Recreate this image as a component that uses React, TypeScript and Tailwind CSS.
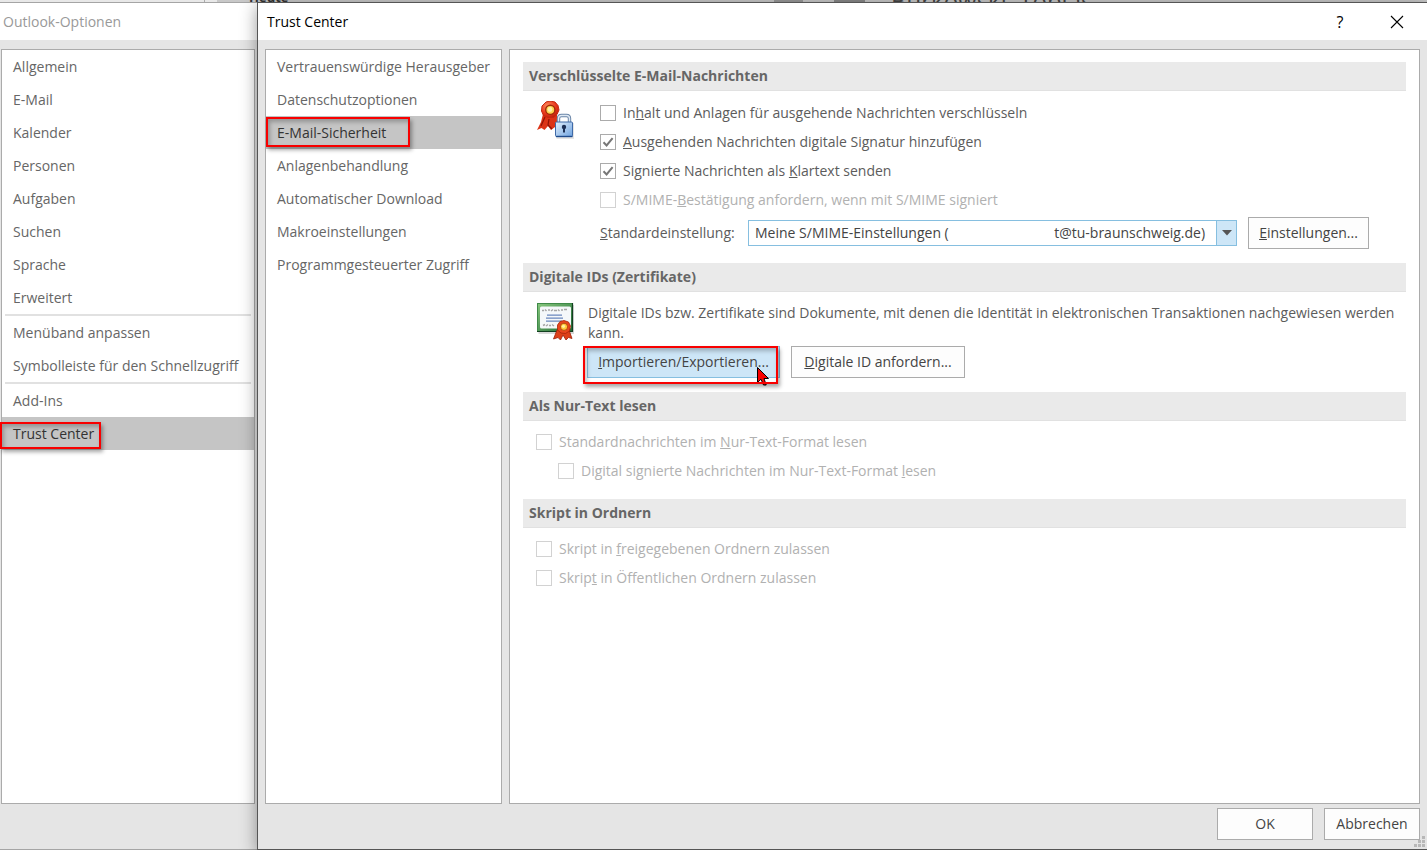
import React from 'react';

const optionGroups = [
  ['Allgemein', 'E-Mail', 'Kalender', 'Personen', 'Aufgaben', 'Suchen', 'Sprache', 'Erweitert'],
  ['Menüband anpassen', 'Symbolleiste für den Schnellzugriff'],
  ['Add-Ins', 'Trust Center'],
];

const trustItems = [
  'Vertrauenswürdige Herausgeber',
  'Datenschutzoptionen',
  'E-Mail-Sicherheit',
  'Anlagenbehandlung',
  'Automatischer Download',
  'Makroeinstellungen',
  'Programmgesteuerter Zugriff',
];

const accountLabel = 'Meine S/MIME-Einstellungen (' + '\u00a0'.repeat(29) + 't@tu-braunschweig.de)';

const Marker: React.FC<{ className: string }> = ({ className }) => (
  <span className={`pointer-events-none absolute border-2 border-[#f80000] shadow-[2px_3px_4px_rgba(0,0,0,0.35),inset_2px_3px_4px_rgba(0,0,0,0.25)] ${className}`}></span>
);

const NavItem: React.FC<{ label: string; active?: boolean; children?: React.ReactNode }> = ({ label, active, children }) => (
  <li className="relative">
    <button
      type="button"
      className={`block h-[33px] w-full whitespace-nowrap pl-[11px] text-left ${active ? 'bg-[#c5c5c5] text-[#333333]' : 'text-[#666666]'}`}
    >
      {label}
    </button>
    {children}
  </li>
);

const Check: React.FC<{ id: string; checked?: boolean; disabled?: boolean; children: React.ReactNode }> = ({ id, checked, disabled, children }) => (
  <div className="flex h-[29px] items-center">
    <span className="relative flex size-4 shrink-0">
      <input
        id={id}
        type="checkbox"
        defaultChecked={checked}
        disabled={disabled}
        className="peer size-4 appearance-none border border-[#ababab] bg-white disabled:border-[#d2d2d2]"
      />
      <svg viewBox="0 0 16 16" className="pointer-events-none absolute inset-0 hidden size-4 peer-checked:block">
        <path d="M3.5 8.2 6.6 11.4 12.6 4.2" fill="none" stroke="#777777" strokeWidth="2" />
      </svg>
    </span>
    <label htmlFor={id} className={`pl-[7px] ${disabled ? 'text-[#b1b1b1]' : 'text-[#5c5c5c]'}`}>
      {children}
    </label>
  </div>
);

const Section: React.FC<{ title: string; children: React.ReactNode }> = ({ title, children }) => (
  <section className="pb-[14px]">
    <h2 className="h-[29px] border-b border-[#e1e1e1] bg-[#eaeaea] pl-1.5 font-bold leading-7 text-[#666666]">{title}</h2>
    {children}
  </section>
);

const PushButton: React.FC<{ hot?: boolean; className?: string; children: React.ReactNode }> = ({ hot, className = '', children }) => (
  <button
    type="button"
    className={`h-8 whitespace-nowrap border text-[#444444] ${hot ? 'border-[#86bfe0] bg-[#cde6f7]' : 'border-[#ababab] bg-[#fdfdfd]'} ${className}`}
  >
    {children}
  </button>
);

const SealLockIcon = () => (
  <svg viewBox="0 0 38 38" className="size-[38px] shrink-0">
    <defs>
      <linearGradient id="lockBody" x1="0" y1="0" x2="1" y2="1">
        <stop offset="0" stopColor="#e4f1fd" />
        <stop offset="1" stopColor="#6fa3e0" />
      </linearGradient>
      <radialGradient id="sealRed" cx="0.35" cy="0.3" r="0.8">
        <stop offset="0" stopColor="#ff8a5c" />
        <stop offset="0.6" stopColor="#e8351a" />
        <stop offset="1" stopColor="#b31d0a" />
      </radialGradient>
    </defs>
    <path d="M7 13 5 21 1 29 5.5 27 8.5 29 12 25 15 29 19 26 21 27V14Z" fill="#dc3316" />
    <path d="M9 16 5 25M13 18 12 24 16 28" stroke="#8f1405" strokeWidth="1.2" fill="none" />
    <path d="M10 1 14 0 19 1 22 4.5 23 9 21 13.5 17.5 16.5 12 16.5 7.5 14.5 5.5 10 6 5Z" fill="url(#sealRed)" stroke="#c52810" />
    <circle cx="14.3" cy="8.8" r="4.6" fill="#ffd451" stroke="#9f2d08" strokeWidth="1.4" />
    <circle cx="14" cy="8.5" r="2.4" fill="#fff2a8" />
    <rect x="20.5" y="22" width="17.5" height="16" fill="#000" opacity="0.1" />
    <path d="M22.5 21V17.5Q22.5 14.5 25.5 14.5H30.5Q33.5 14.5 33.5 17.5V21" fill="none" stroke="#6b86a8" strokeWidth="3.4" />
    <path d="M22.5 21V17.5Q22.5 14.5 25.5 14.5H30.5Q33.5 14.5 33.5 17.5V21" fill="none" stroke="#dfe9f4" strokeWidth="1.4" />
    <rect x="19.5" y="21" width="17" height="14.5" rx="1" fill="url(#lockBody)" stroke="#3f6aa8" />
    <path d="M20 35.5H36.5" stroke="#1e4a8c" strokeWidth="1.4" />
    <circle cx="28" cy="26" r="2.2" fill="#1c2f55" />
    <path d="M27 26H29V31.5H27Z" fill="#1c2f55" />
  </svg>
);

const CertificateIcon = () => (
  <svg viewBox="0 0 38 38" className="size-[38px] shrink-0">
    <defs>
      <linearGradient id="certFrame" x1="0" y1="0" x2="1" y2="1">
        <stop offset="0" stopColor="#86c67c" />
        <stop offset="1" stopColor="#1f6b35" />
      </linearGradient>
    </defs>
    <rect x="2.5" y="2" width="35.5" height="29" fill="#000" opacity="0.15" />
    <rect x="1.5" y="0.5" width="35" height="28" fill="url(#certFrame)" stroke="#3f8a48" />
    <path d="M1 28.5H36.5V0" fill="none" stroke="#123f20" strokeWidth="1.2" />
    <rect x="4" y="3.5" width="31" height="22" rx="1.5" fill="#f5f8fa" />
    <path d="M6 7.5H8M9 6.5 10.5 8M12 7H14M15 8 17 6.5M18 7.5H21M22 6.5 23.5 8M25 7H27M28 6.5H31" stroke="#a5a5a5" strokeWidth="1.4" />
    <path d="M11 12.2H26M10 15.2H27M10 18.2H26" stroke="#6a86bd" strokeWidth="1.3" />
    <path d="M7 22.5 9 21.5M10 23 12 21.5M13 22.5H15M16 21.5 18 23" stroke="#a5a5a5" strokeWidth="1.4" />
    <path d="M21 27 17.5 36 22 34.5 24.5 37 27 32 30 37 32.5 34.5 36 35.5 33 27Z" fill="#dd3f18" stroke="#9b2007" strokeWidth="0.8" />
    <path d="M24 18.5 28 17.5 32.5 19 34.5 23 33.5 28 29.5 30.5 25 30 21.5 27 21.5 22Z" fill="#e8451c" stroke="#a82509" strokeWidth="0.8" />
    <circle cx="28" cy="23.8" r="3.6" fill="#ffc83c" stroke="#a53a08" strokeWidth="0.8" />
    <circle cx="27.5" cy="23.3" r="1.6" fill="#fff0a0" />
  </svg>
);

const OptionsWindow = () => (
  <div className="flex w-[257px] shrink-0 flex-col border-b border-t border-[#a5a5a5] bg-[#e5e5e5]">
    <h1 className="h-[37px] bg-white pl-[3px] leading-[37px] text-[#999999]">Outlook-Optionen</h1>
    <nav className="mb-[45px] ml-px mr-0.5 mt-[9px] flex-1 border border-[#ababab] bg-white">
      {optionGroups.map((group, i) => (
        <ul key={group[0]} className="relative">
          {i > 0 && <li className="mx-[3px] h-0.5 bg-[#e1e1e1]"></li>}
          {group.map((label) => (
            <NavItem key={label} label={label} active={label === 'Trust Center'}>
              {label === 'Trust Center' && <Marker className="-left-0.5 top-[5px] h-[27px] w-[101px]" />}
            </NavItem>
          ))}
        </ul>
      ))}
    </nav>
  </div>
);

const TitleBar = () => (
  <header className="flex h-[37px] shrink-0 items-center bg-white pl-[9px] pr-[22px] text-black">
    <h1 className="flex-1">Trust Center</h1>
    <button type="button" aria-label="Hilfe" className="mr-[41px] w-4 text-center text-[16px]">?</button>
    <button type="button" aria-label="Schließen" className="size-4">
      <svg viewBox="0 0 16 16" className="size-4">
        <path d="M2 2 14 14M14 2 2 14" stroke="#000000" strokeWidth="1.1" fill="none" />
      </svg>
    </button>
  </header>
);

const SettingsPanel = () => (
  <main className="min-w-0 flex-1 border border-[#ababab] bg-white pl-[13px] pr-[13px] pt-3">
    <Section title="Verschlüsselte E-Mail-Nachrichten">
      <div className="flex pl-[13px] pt-[7px]">
        <div className="w-16 pt-[3px]">
          <SealLockIcon />
        </div>
        <div className="flex-1">
          <Check id="encrypt">In<u>h</u>alt und Anlagen für ausgehende Nachrichten verschlüsseln</Check>
          <Check id="sign" checked><u>A</u>usgehenden Nachrichten digitale Signatur hinzufügen</Check>
          <Check id="clear" checked>Signierte Nachrichten als <u>K</u>lartext senden</Check>
          <Check id="receipt" disabled>S/MIME-<u>B</u>estätigung anfordern, wenn mit S/MIME signiert</Check>
          <div className="flex items-center pt-[3px]">
            <label htmlFor="account" className="w-[148px] text-[#5c5c5c]"><u>S</u>tandardeinstellung:</label>
            <div className="relative mr-[11px] flex w-[489px]">
              <select id="account" className="h-[26px] w-full appearance-none border border-[#86bfe0] bg-white pl-1.5 pr-6 text-[#444444]">
                <option>{accountLabel}</option>
              </select>
              <span className="pointer-events-none absolute right-0 top-0 flex h-[26px] w-[21px] items-center justify-center border border-[#86bfe0] bg-[#cde6f7]">
                <svg viewBox="0 0 10 6" className="h-[6px] w-[10px]">
                  <path d="M0 0H10L5 5.5Z" fill="#555555" />
                </svg>
              </span>
            </div>
            <PushButton className="w-[121px]"><u>E</u>instellungen...</PushButton>
          </div>
        </div>
      </div>
    </Section>

    <Section title="Digitale IDs (Zertifikate)">
      <div className="flex pl-[13px] pt-[11px]">
        <div className="w-[52px] shrink-0">
          <CertificateIcon />
        </div>
        <div className="flex-1">
          <p className="text-[#5c5c5c]">
            Digitale IDs bzw. Zertifikate sind Dokumente, mit denen die Identität in elektronischen Transaktionen nachgewiesen werden kann.
          </p>
          <div className="flex gap-[11px] pt-[3px]">
            <div className="relative -ml-px">
              <PushButton hot className="w-[193px]"><u>I</u>mportieren/Exportieren...</PushButton>
              <svg viewBox="0 0 14 20" className="pointer-events-none absolute left-[170px] top-[21px] h-5 w-3.5">
                <path d="M0.5 0.5V15.5L4 12.2 6.5 18H9.2L7 11.5H11.5Z" fill="#f80000" stroke="#000000" />
              </svg>
              <Marker className="-left-1 top-0 h-[38px] w-[195px]" />
            </div>
            <PushButton className="w-[174px]"><u>D</u>igitale ID anfordern...</PushButton>
          </div>
        </div>
      </div>
    </Section>

    <Section title="Als Nur-Text lesen">
      <div className="pl-[13px] pt-1.5">
        <Check id="plain" disabled>Standardnachrichten im <u>N</u>ur-Text-Format lesen</Check>
        <div className="pl-[22px]">
          <Check id="plainSigned" disabled>Digital signierte Nachrichten im Nur-Text-Format <u>l</u>esen</Check>
        </div>
      </div>
    </Section>

    <Section title="Skript in Ordnern">
      <div className="pl-[13px] pt-1.5">
        <Check id="shared" disabled>Skript in <u>f</u>reigegebenen Ordnern zulassen</Check>
        <Check id="public" disabled>Skrip<u>t</u> in Öffentlichen Ordnern zulassen</Check>
      </div>
    </Section>
  </main>
);

const TrustWindow = () => (
  <div className="relative flex min-w-0 flex-1 flex-col border-y border-l border-[#555555] bg-[#e5e5e5] shadow-[0_4px_16px_rgba(0,0,0,0.4)]">
    <TitleBar />
    <div className="flex min-h-0 flex-1 gap-[7px] pl-[7px] pr-[7px] pt-[9px]">
      <nav className="w-[237px] shrink-0 border border-[#ababab] bg-white">
        <ul>
          {trustItems.map((label) => (
            <NavItem key={label} label={label} active={label === 'E-Mail-Sicherheit'}>
              {label === 'E-Mail-Sicherheit' && <Marker className="left-0 top-px h-[30px] w-[144px]" />}
            </NavItem>
          ))}
        </ul>
      </nav>
      <SettingsPanel />
    </div>
    <footer className="relative flex shrink-0 justify-end gap-[11px] pb-[9px] pr-[7px] pt-1">
      <PushButton className="w-24">OK</PushButton>
      <PushButton className="w-24">Abbrechen</PushButton>
      <svg viewBox="0 0 11 11" className="absolute bottom-0.5 right-0.5 size-[11px]">
        <path d="M8 0h3v3H8ZM4 4h3v3H4ZM8 4h3v3H8ZM0 8h3v3H0ZM4 8h3v3H4ZM8 8h3v3H8Z" fill="#b8b8b8" />
      </svg>
    </footer>
  </div>
);

export default function App() {
  return (
    <div className="flex h-screen flex-col overflow-hidden bg-[#c8c8c8] font-['Open_Sans','Noto_Sans',sans-serif] text-[14px] leading-5">
      {/* sliver of the mail window behind the dialogs */}
      <div className="flex h-0.5 shrink-0 overflow-hidden">
        <div className="w-[205px] shrink-0 border-r border-[#aaaaaa] bg-[#e8e8e8]"></div>
        <div className="w-3 shrink-0 bg-[#e8e8e8]"></div>
        <div className="flex w-[557px] shrink-0 items-end pl-8 text-[13px] font-bold leading-[10px] text-[#333333]">Heute</div>
        <div className="w-[29px] shrink-0 bg-[#999999]"></div>
        <div className="ml-[31px] w-[31px] shrink-0 bg-[#888888]"></div>
        <div className="flex items-center whitespace-nowrap pl-[26px] text-[24px] text-[#444444]">Burkowski, Tobias</div>
      </div>
      <div className="flex min-h-0 flex-1">
        <OptionsWindow />
        <TrustWindow />
      </div>
    </div>
  );
}
